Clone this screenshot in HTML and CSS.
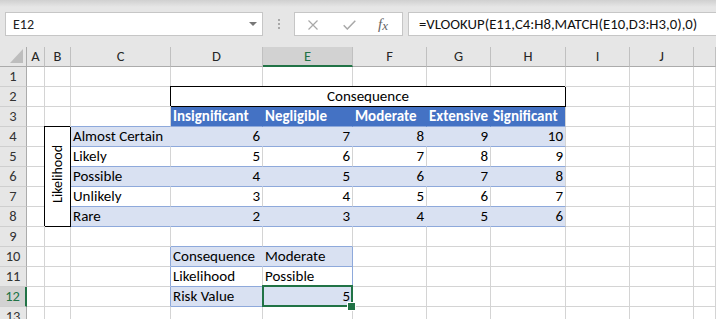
FILE: index.html
```html
<!DOCTYPE html>
<html>
<head>
<meta charset="utf-8">
<link rel="stylesheet" href="styles.css">
</head>
<body>
<div class="toolbar">
  <div class="namebox"><span>E12</span><span class="caret"></span></div>
  <div class="grip"><i></i><i></i><i></i></div>
  <div class="buttons">
    <svg class="ico-x" width="10" height="10" viewBox="0 0 10 10"><path d="M0.5 0.5L9.5 9.5M9.5 0.5L0.5 9.5" stroke="#a8a8a8" stroke-width="1.2" fill="none"/></svg>
    <svg class="ico-ok" width="13" height="10" viewBox="0 0 13 10"><path d="M0.7 5.3L4.3 9L12.3 0.7" fill="none" stroke="#a8a8a8" stroke-width="1.5"/></svg>
    <span class="fx"><i>f</i><i class="fxx">x</i></span>
  </div>
  <div class="formula">=VLOOKUP(E11,C4:H8,MATCH(E10,D3:H3,0),0)</div>
</div>

<div class="sheet">
  <!-- column headers -->
  <div class="corner"><svg width="13" height="14" viewBox="0 0 13 14"><polygon points="13,0 13,14 0,14" fill="#bdbdbd"/></svg></div>
  <div class="ch">A</div><div class="ch">B</div><div class="ch">C</div><div class="ch">D</div><div class="ch sel">E</div><div class="ch">F</div><div class="ch">G</div><div class="ch">H</div><div class="ch">I</div><div class="ch">J</div><div class="ch"></div>

  <!-- row 1 -->
  <div class="rh">1</div><div></div><div></div><div></div><div></div><div></div><div></div><div></div><div></div><div></div><div></div><div></div>

  <!-- row 2 -->
  <div class="rh">2</div><div></div><div></div><div></div>
  <div class="box cons">Consequence</div>
  <div></div><div></div><div></div>

  <!-- row 3 -->
  <div class="rh">3</div><div></div><div></div><div class="bb"></div>
  <div class="hd">Insignificant</div><div class="hd">Negligible</div><div class="hd">Moderate</div><div class="hd">Extensive</div><div class="hd last">Significant</div>
  <div></div><div></div><div></div>

  <!-- row 4 -->
  <div class="rh">4</div><div></div>
  <div class="box lik"><span>Likelihood</span></div>
  <div class="band">Almost Certain</div><div class="band n">6</div><div class="band n">7</div><div class="band n">8</div><div class="band n">9</div><div class="band n last">10</div>
  <div></div><div></div><div></div>

  <!-- row 5 -->
  <div class="rh">5</div><div></div>
  <div class="wt">Likely</div><div class="wt n">5</div><div class="wt n">6</div><div class="wt n">7</div><div class="wt n">8</div><div class="wt n">9</div>
  <div></div><div></div><div></div>

  <!-- row 6 -->
  <div class="rh">6</div><div></div>
  <div class="band">Possible</div><div class="band n">4</div><div class="band n">5</div><div class="band n">6</div><div class="band n">7</div><div class="band n last">8</div>
  <div></div><div></div><div></div>

  <!-- row 7 -->
  <div class="rh">7</div><div></div>
  <div class="wt">Unlikely</div><div class="wt n">3</div><div class="wt n">4</div><div class="wt n">5</div><div class="wt n">6</div><div class="wt n">7</div>
  <div></div><div></div><div></div>

  <!-- row 8 -->
  <div class="rh">8</div><div></div>
  <div class="band">Rare</div><div class="band n">2</div><div class="band n">3</div><div class="band n">4</div><div class="band n">5</div><div class="band n last">6</div>
  <div></div><div></div><div></div>

  <!-- row 9 -->
  <div class="rh">9</div><div></div><div></div><div></div><div class="bb"></div><div class="bb"></div><div></div><div></div><div></div><div></div><div></div><div></div>

  <!-- row 10 -->
  <div class="rh">10</div><div></div><div></div><div class="bl"></div>
  <div class="band">Consequence</div><div class="band er">Moderate</div>
  <div></div><div></div><div></div><div></div><div></div><div></div>

  <!-- row 11 -->
  <div class="rh">11</div><div></div><div></div><div class="bl"></div>
  <div class="wt">Likelihood</div><div class="wt er">Possible</div>
  <div></div><div></div><div></div><div></div><div></div><div></div>

  <!-- row 12 -->
  <div class="rh selr">12</div><div></div><div></div><div class="bl"></div>
  <div class="band">Risk Value</div><div class="band n er selc">5</div>
  <div></div><div></div><div></div><div></div><div></div><div></div>

  <!-- row 13 -->
  <div class="rh">13</div><div></div><div></div><div></div><div></div><div></div><div></div><div></div><div></div><div></div><div></div><div></div>
</div>
</body>
</html>
```

FILE: styles.css
```css
* { box-sizing: border-box; }
html, body { margin: 0; padding: 0; }
body {
  width: 716px;
  height: 319px;
  overflow: hidden;
  background: #ffffff;
  font-family: Carlito, Calibri, Lato, "Noto Sans", sans-serif;
  font-size: 15px;
  color: #000;
}

/* ---------- formula bar ---------- */
.toolbar {
  height: 47px;
  background: linear-gradient(#d0d0d0, #e6e6e6 7px);
  display: flex;
  align-items: flex-start;
  padding: 12px 0 0 5px;
}
.namebox {
  width: 258px;
  height: 24px;
  background: #fff;
  border: 1px solid #c6c6c6;
  display: flex;
  align-items: center;
  justify-content: space-between;
  padding: 0 5px 0 7px;
  font-size: 14px;
  color: #222;
}
.caret {
  width: 0;
  height: 0;
  border-left: 4px solid transparent;
  border-right: 4px solid transparent;
  border-top: 4px solid #777;
}
.grip {
  width: 31px;
  height: 24px;
  display: flex;
  flex-direction: column;
  align-items: center;
  justify-content: center;
  gap: 2px;
}
.grip i {
  display: block;
  width: 2px;
  height: 2px;
  background: #a8a8a8;
}
.buttons {
  width: 109px;
  height: 24px;
  background: #fff;
  border: 1px solid #c6c6c6;
  display: flex;
  align-items: center;
  padding-left: 13px;
}
.ico-x { margin-top: 1px; }
.ico-ok { margin-left: 25px; margin-top: 1px; }
.fx {
  margin-left: 22px;
  font-family: "Liberation Serif", serif;
  font-size: 15px;
  color: #666;
  line-height: 1;
}
.fx .fxx { font-size: 13px; position: relative; top: 1px; }
.formula {
  flex: 1;
  height: 24px;
  margin-left: 5px;
  background: #fff;
  border: 1px solid #c6c6c6;
  border-right: none;
  padding-left: 10px;
  display: flex;
  align-items: center;
  font-size: 14.75px;
  color: #111;
  white-space: nowrap;
}

/* ---------- grid ---------- */
.sheet {
  display: grid;
  grid-template-columns: 27px 18px 26px 100px 92px 90px 74px 64px 75px 64px 64px 22px;
  grid-auto-rows: 20px;
}
.sheet > div {
  border-right: 1px solid #d4d4d4;
  border-bottom: 1px solid #d4d4d4;
  line-height: 19px;
  white-space: nowrap;
  padding: 0 2px;
}

.corner {
  background: #e6e6e6;
  border-right-color: #ababab !important;
  border-bottom-color: #ababab !important;
  display: flex;
  align-items: flex-end;
  justify-content: flex-end;
  padding: 0 3px 3px 0 !important;
}
.corner svg { display: block; }

.sheet > .ch {
  background: #e6e6e6;
  border-right-color: #c0c0c0;
  border-bottom-color: #ababab;
  text-align: center;
  color: #262626;
  font-size: 14.5px;
}
.sheet > .ch.sel {
  background: #d2d2d2;
  color: #217346;
  border-bottom: 2px solid #217346;
  line-height: 18px;
}
.sheet > .rh {
  background: #e6e6e6;
  border-right-color: #ababab;
  border-bottom-color: #cfcfcf;
  text-align: center;
  color: #333;
  font-size: 14.5px;
  padding: 0;
}
.sheet > .rh.selr {
  background: #d2d2d2;
  color: #217346;
  border-right: 2px solid #217346;
}

/* merged boxed cells */
.sheet > .box {
  background: #fff;
  border-right-color: #000;
  border-bottom-color: #000;
  box-shadow: -1px -1px 0 0 #000;
  z-index: 1;
}
.cons {
  grid-column: span 5;
  text-align: center;
}
.lik {
  grid-row: span 5;
  display: flex;
  align-items: center;
  justify-content: center;
}
.lik span {
  writing-mode: vertical-rl;
  transform: rotate(180deg);
  font-size: 14px;
  line-height: 1;
  margin-top: -6px;
}

/* table styles */
.sheet > .hd {
  background: #4472c4;
  color: #fff;
  font-weight: bold;
  border-right-color: transparent;
  border-bottom-color: #8ea9db;
}
.sheet > .band {
  background: #d9e1f2;
  border-right-color: transparent;
  border-bottom-color: #8ea9db;
}
.sheet > .wt {
  border-bottom-color: #8ea9db;
}
.sheet > .bb { border-bottom-color: #8ea9db; }
.sheet > .bl { border-right-color: #8ea9db; }
.sheet > .er { border-right-color: #8ea9db; }
.sheet > .last { border-right-color: #d4d4d4; }
.sheet > .n { text-align: right; }

/* selected cell */
.selc { position: relative; }
.selc::before {
  content: "";
  position: absolute;
  left: -1px;
  top: -2px;
  right: -1px;
  bottom: -1px;
  border: 2px solid #217346;
}
.selc::after {
  content: "";
  position: absolute;
  width: 7px;
  height: 7px;
  right: -4px;
  bottom: -5px;
  background: #217346;
  border: 1px solid #fff;
}
```
